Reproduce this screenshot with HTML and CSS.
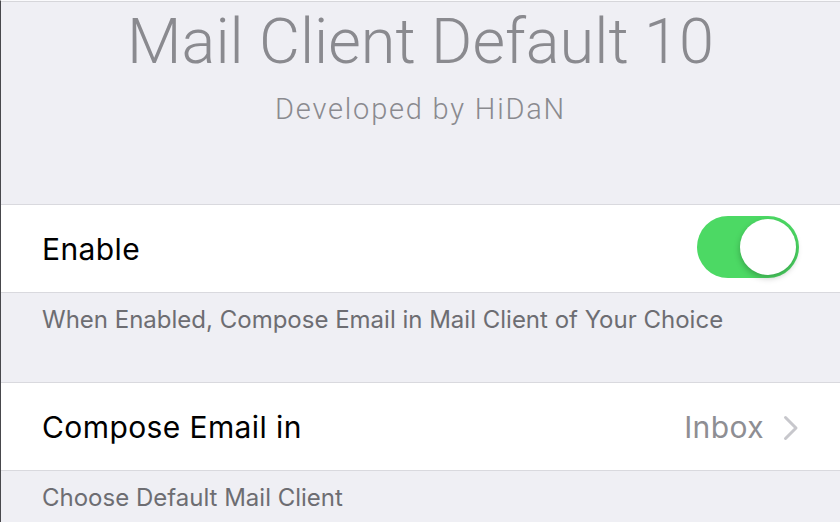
FILE: index.html
```html
<!DOCTYPE html>
<html lang="en">
<head>
    <meta charset="UTF-8">
    <meta name="viewport" content="width=device-width, initial-scale=1.0">
    <title>Mail Client Default 10</title>
    <link rel="stylesheet" href="styles.css">
</head>
<body>
    <div class="screen">
        <div class="header">
            <h1>Mail Client Default 10</h1>
            <p class="byline">Developed by HiDaN</p>
        </div>

        <div class="cell">
            <span class="cell-label">Enable</span>
            <div class="switch on">
                <div class="knob"></div>
            </div>
        </div>
        <div class="footer">When Enabled, Compose Email in Mail Client of Your Choice</div>

        <div class="cell">
            <span class="cell-label">Compose Email in</span>
            <span class="cell-value">Inbox</span>
            <svg class="chevron" width="16" height="26" viewBox="0 0 16 26">
                <path d="M2.5 2.5 L13 13 L2.5 23.5" fill="none" stroke="#c7c7cc" stroke-width="3" stroke-linecap="round" stroke-linejoin="round"/>
            </svg>
        </div>
        <div class="footer last">Choose Default Mail Client</div>
    </div>
</body>
</html>
```

FILE: styles.css
```css
body {
    margin: 0;
    background-color: #efeff4;
    font-family: 'Inter', 'Helvetica Neue', sans-serif;
    overflow: hidden;
}
.screen {
    height: 522px;
    overflow: hidden;
    border-left: 1px solid #48484c;
    border-top: 1px solid #fafafc;
    box-sizing: border-box;
}
.header {
    height: 203px;
    border-top: 1px solid #d6d6da;
    text-align: center;
    box-sizing: border-box;
}
h1 {
    margin: 0;
    padding-top: 3px;
    font-family: 'Roboto', sans-serif;
    font-weight: 300;
    font-size: 63px;
    line-height: 74px;
    color: #8a8a8f;
}
.byline {
    margin: 10px 0 0;
    font-family: 'Roboto', sans-serif;
    font-weight: 300;
    font-size: 29px;
    line-height: 40px;
    letter-spacing: 1.8px;
    color: #8a8a8f;
}
.cell {
    display: flex;
    align-items: center;
    height: 87px;
    padding: 0 41px 0 41px;
    background-color: #ffffff;
    border-top: 1px solid #d9d9de;
    border-bottom: 1px solid #d9d9de;
}
.cell-label {
    flex: 1;
    font-size: 30px;
    letter-spacing: 0.4px;
    color: #000000;
}
.cell-value {
    font-size: 30px;
    letter-spacing: 0.4px;
    color: #8e8e93;
    margin-right: 19px;
}
.chevron {
    margin-top: 2px;
}
.switch {
    position: relative;
    width: 102px;
    height: 62px;
    margin-top: -4px;
    border-radius: 31px;
    background-color: #4cd964;
}
.switch .knob {
    position: absolute;
    top: 3px;
    right: 3px;
    width: 56px;
    height: 56px;
    border-radius: 50%;
    background-color: #ffffff;
    box-shadow: 0 3px 6px rgba(0, 0, 0, 0.25);
}
.footer {
    height: 89px;
    padding: 12px 41px 0;
    box-sizing: border-box;
    font-size: 24px;
    color: #6d6d72;
}
.footer.last {
    height: 52px;
}
```
